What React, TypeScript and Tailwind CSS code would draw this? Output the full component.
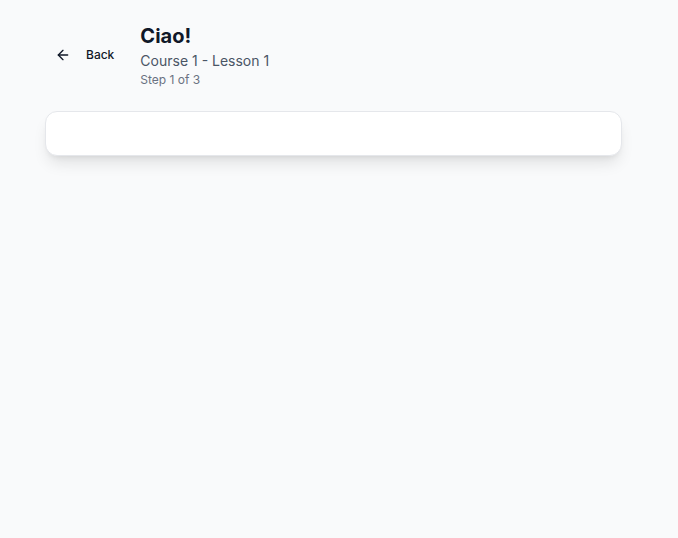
import React from 'react';
import { ArrowLeft } from 'lucide-react';

const App: React.FC = () => {
  return (
    <div className="min-h-screen w-full bg-gray-50 font-['Inter',sans-serif] text-gray-900">
      <div className="pl-[45px] pt-[22px] w-[622px]">
        <div className="flex items-center gap-[14px] mb-[23px]">
          <button className="flex items-center gap-[15px] pl-[10px] pr-3 py-2 rounded-md text-xs font-medium text-gray-900 hover:bg-gray-100">
            <ArrowLeft className="w-4 h-4" />
            Back
          </button>
          <div>
            <h1 className="text-xl font-bold leading-7">Ciao!</h1>
            <p className="text-sm text-gray-600 leading-5 mt-px">Course 1 - Lesson 1</p>
            <p className="text-xs text-gray-500 leading-4 mt-px">Step 1 of 3</p>
          </div>
        </div>
        <div className="h-[45px] bg-white border border-gray-200 rounded-xl shadow-lg" />
      </div>
    </div>
  );
};

export default App;
